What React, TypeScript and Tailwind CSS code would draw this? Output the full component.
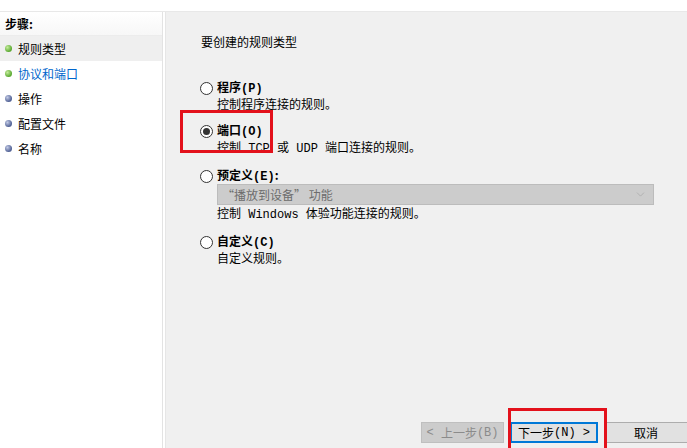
import { ChevronDown } from 'lucide-react';

const steps = [
  { label: '规则类型', done: true, active: false, selected: true },
  { label: '协议和端口', done: true, active: true, selected: false },
  { label: '操作', done: false, active: false, selected: false },
  { label: '配置文件', done: false, active: false, selected: false },
  { label: '名称', done: false, active: false, selected: false },
];

function Bullet({ done }: { done: boolean }) {
  return (
    <span
      className={
        done
          ? 'w-[7px] h-[7px] rounded-full bg-[radial-gradient(circle_at_35%_35%,#c6ec9c,#58a82f_70%)]'
          : 'w-[7px] h-[7px] rounded-full bg-[radial-gradient(circle_at_35%_35%,#c3cbe6,#4e5f93_70%)]'
      }
    />
  );
}

function Radio({ checked }: { checked?: boolean }) {
  return (
    <span className="w-[13px] h-[13px] rounded-full border border-[#333] bg-white flex items-center justify-center shrink-0">
      {checked && <span className="w-[7px] h-[7px] rounded-full bg-[#333]" />}
    </span>
  );
}

// latin text in the dialog is fixed-width
const mono = "font-['Liberation_Mono',monospace] text-[12px] leading-[16px] whitespace-pre";

function Option({
  title,
  hotkey,
  suffix,
  checked,
  children,
}: {
  title: string;
  hotkey: string;
  suffix?: string;
  checked?: boolean;
  children: React.ReactNode;
}) {
  return (
    <div className="flex flex-col">
      <div className="flex items-center gap-[4px] h-[16px]">
        <Radio checked={checked} />
        <span className="font-bold leading-[16px]">
          {title}
          <span className={mono + ' font-bold'}>({hotkey})</span>
          {suffix}
        </span>
      </div>
      <div className="pl-[17px] leading-[16px]">{children}</div>
    </div>
  );
}

export default function App() {
  return (
    <div className="relative w-[687px] h-[448px] overflow-hidden bg-white text-[12px] text-black font-['Noto_Sans_CJK_SC',sans-serif]">
      {/* top strip */}
      <div className="h-[12px] bg-white border-b border-[#e8e8e8]" />

      <div className="flex h-[436px]">
        {/* steps panel */}
        <div className="w-[163px] shrink-0 bg-white border-r border-[#e3e3e3] flex flex-col">
          <div className="h-[24px] flex items-center pl-[5px] font-bold border-b border-[#ececec] bg-[linear-gradient(#ffffff,#f7f7f7)]">
            步骤:
          </div>
          {steps.map(s => (
            <div
              key={s.label}
              className={
                s.selected
                  ? 'h-[25px] flex items-center gap-[6px] pl-[5px] bg-[#efefef]'
                  : 'h-[25px] flex items-center gap-[6px] pl-[5px]'
              }
            >
              <Bullet done={s.done} />
              <span className={s.active ? 'text-[#0066cc]' : ''}>{s.label}</span>
            </div>
          ))}
        </div>

        {/* wizard page */}
        <div className="flex-1 ml-[2px] border-l border-[#e6e6e6] bg-[#f0f0f0] flex flex-col">
          <div className="flex-1 pl-[34px] pt-[22px]">
            <div className="pl-[1px] leading-[16px]">要创建的规则类型</div>

            <div className="mt-[30px] flex flex-col gap-[11px]">
              <Option title="程序" hotkey="P">
                控制程序连接的规则。
              </Option>
              <Option title="端口" hotkey="O" checked>
                控制<span className={mono}>{' TCP '}</span>或<span className={mono}>{' UDP '}</span>端口连接的规则。
              </Option>
              <Option title="预定义" hotkey="E" suffix=":">
                <div className="w-[437px] h-[21px] bg-[#cccccc] border border-[#bcbcbc] flex items-center justify-between pl-[4px] pr-[6px] text-[#6d6d6d]">
                  <span>“播放到设备” 功能</span>
                  <ChevronDown size={13} strokeWidth={1} className="text-[#9a9a9a]" />
                </div>
                控制<span className={mono}>{' Windows '}</span>体验功能连接的规则。
              </Option>
              <Option title="自定义" hotkey="C">
                自定义规则。
              </Option>
            </div>
          </div>

          {/* buttons */}
          <div className="flex items-center pl-[255px] pb-[5px]">
            <div className="w-[83px] h-[21px] shrink-0 bg-[#cccccc] border border-[#bfbfbf] flex items-center justify-center text-[#8b8b8b]">
              <span className={mono}>{'< '}</span>上一步<span className={mono}>(B)</span>
            </div>
            <div className="ml-[6px] w-[88px] h-[21px] shrink-0 bg-[#e1e1e1] border-2 border-[#0078d7] flex items-center justify-center">
              下一步<span className={mono}>{'(N) >'}</span>
            </div>
            <div className="ml-[7px] w-[86px] h-[21px] shrink-0 bg-[#e1e1e1] border border-[#adadad] flex items-center justify-center pr-[4px]">
              取消
            </div>
          </div>
        </div>
      </div>

      {/* annotation boxes */}
      <div className="absolute left-[180px] top-[110px] w-[93px] h-[43px] border-[3px] border-[#e3111b]" />
      <div className="absolute left-[508px] top-[408px] w-[99px] h-[44px] border-[3px] border-[#e3111b]" />
    </div>
  );
}
